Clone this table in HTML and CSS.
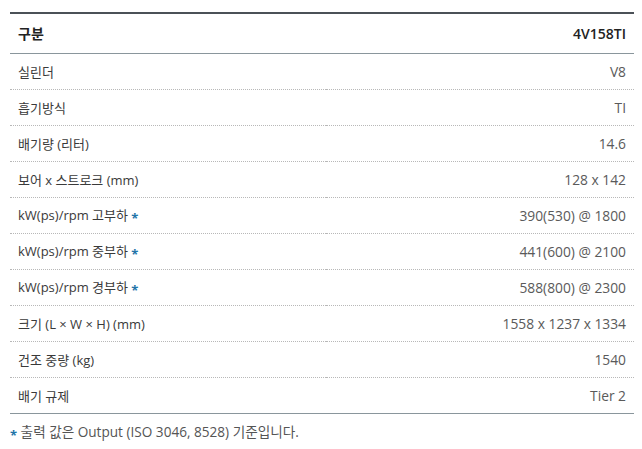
FILE: index.html
```html
<!DOCTYPE html>
<html lang="ko">
<head>
<meta charset="utf-8">
<link rel="stylesheet" href="styles.css">
</head>
<body>
<div class="wrap">
<table class="spec">
<thead>
<tr><th class="lbl">구분</th><th class="val">4V158TI</th></tr>
</thead>
<tbody>
<tr><td class="lbl">실린더</td><td class="val">V8</td></tr>
<tr><td class="lbl">흡기방식</td><td class="val">TI</td></tr>
<tr><td class="lbl">배기량 (리터)</td><td class="val">14.6</td></tr>
<tr><td class="lbl">보어 x 스트로크 (mm)</td><td class="val">128 x 142</td></tr>
<tr><td class="lbl">kW(ps)/rpm 고부하 <span class="star">*</span></td><td class="val">390(530) @ 1800</td></tr>
<tr><td class="lbl">kW(ps)/rpm 중부하 <span class="star">*</span></td><td class="val">441(600) @ 2100</td></tr>
<tr><td class="lbl">kW(ps)/rpm 경부하 <span class="star">*</span></td><td class="val">588(800) @ 2300</td></tr>
<tr><td class="lbl">크기 (L × W × H) (mm)</td><td class="val">1558 x 1237 x 1334</td></tr>
<tr><td class="lbl">건조 중량 (kg)</td><td class="val">1540</td></tr>
<tr class="last"><td class="lbl">배기 규제</td><td class="val">Tier 2</td></tr>
</tbody>
</table>
<p class="note"><span class="star">*</span> 출력 값은 Output (ISO 3046, 8528) 기준입니다.</p>
</div>
</body>
</html>
```
FILE: styles.css
```css
html, body {
  margin: 0;
  padding: 0;
  background: #fff;
}
body {
  font-family: "Open Sans", "Noto Sans CJK KR", sans-serif;
  font-size: 13px;
  color: #555;
}
.wrap {
  padding: 12px 8px 0 10px;
}
.spec {
  width: 624px;
  border-collapse: collapse;
  border-top: 2px solid #4b5157;
}
.spec th {
  height: 40px;
  padding: 0 8px;
  font-size: 14px;
  font-weight: 600;
  color: #222;
  border-bottom: 1px solid #8a969c;
  box-sizing: border-box;
}
.spec td {
  height: 36px;
  padding: 0 8px;
  border-bottom: 1px dotted #b8b8b8;
  box-sizing: border-box;
}
.spec tr.last td {
  border-bottom: 1px solid #8a969c;
}
.spec .lbl {
  text-align: left;
  color: #3a3a3a;
}
.spec .val {
  text-align: right;
}
.spec td.val {
  color: #5a5a5a;
  font-size: 13.8px;
}
.spec th.lbl, .spec th.val {
  color: #222;
}
.star {
  display: inline-block;
  color: #2374a8;
  font-size: 13px;
  font-weight: bold;
  vertical-align: -3px;
  line-height: 1;
}
.note {
  margin: 9px 0 0 0;
  color: #555;
  font-size: 13.6px;
  line-height: 18px;
}
```
